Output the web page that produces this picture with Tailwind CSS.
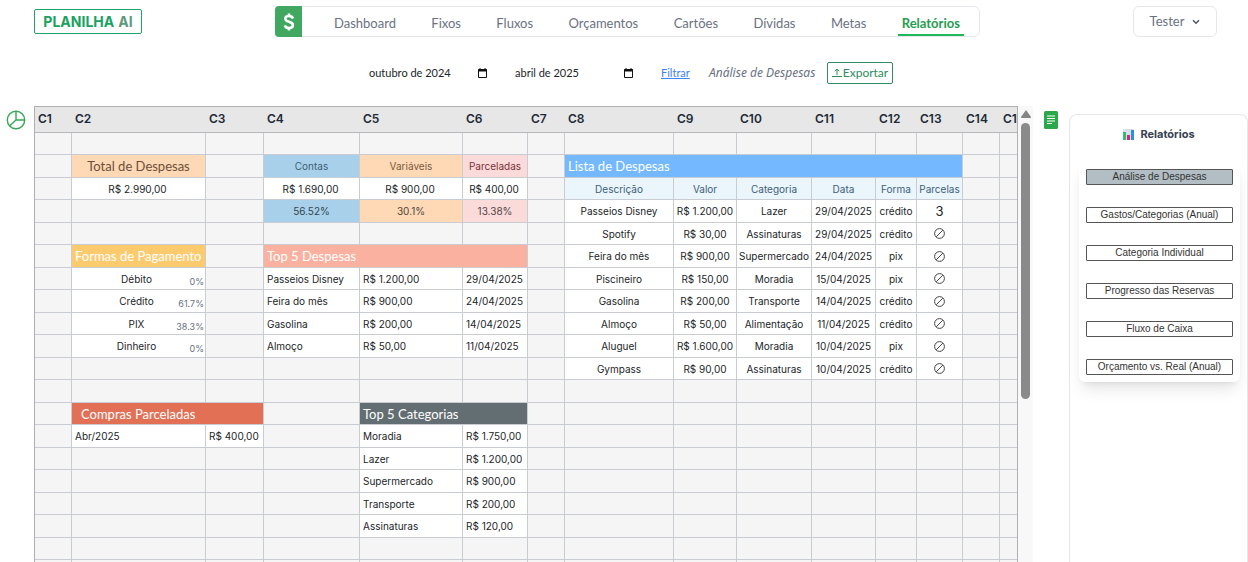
<!DOCTYPE html>
<html lang="pt-BR">
  <head>
    <meta charset="UTF-8" />
    <meta name="viewport" content="width=device-width, initial-scale=1.0" />
    <title>Planilha AI - Relatórios</title>
    <script src="https://cdn.jsdelivr.net/npm/@tailwindcss/browser@4"></script>
  </head>
  <body class="bg-white font-['Lato',sans-serif] text-[#212529]">
    <div class="flex h-screen flex-col overflow-hidden">
      <!-- Top bar -->
      <header class="flex items-start pt-[6px] pr-[31px] pl-[34px]">
        <a
          href="#"
          class="mt-[3px] flex h-[25px] w-[108px] items-center justify-center gap-1 rounded-[2px] border border-[#1fa463] font-['Inter',sans-serif] text-[14px] font-bold text-[#1aa260]"
          >PLANILHA <span class="text-[#5c9a7d]">AI</span></a
        >

        <nav
          class="ml-[133px] flex h-[31px] w-[705px] rounded-[6px] border border-gray-200 text-[13px] text-gray-500"
        >
          <a
            href="#"
            aria-label="Início"
            class="-my-px -ml-px flex w-[27px] items-center justify-center rounded-l-[4px] bg-[#40a860]"
          >
            <svg width="12" height="20" viewBox="0 0 12 20" fill="none" stroke="#fff" stroke-width="2.6">
              <path d="M10 6.500C9.400 4.800 8 4 6 4C3.700 4 2.300 5 2.300 6.700C2.300 10.600 9.900 8.800 9.900 13C9.900 15 8.300 16 6 16C3.800 16 2.300 15.100 1.800 13.300M6 1.500V4M6 16V18.500" />
            </svg>
          </a>
          <div class="flex flex-1 justify-between pr-[15px] pl-[32px]">
            <a href="#" class="flex items-center pt-[4px]">Dashboard</a>
            <a href="#" class="flex items-center pt-[4px]">Fixos</a>
            <a href="#" class="flex items-center pt-[4px]">Fluxos</a>
            <a href="#" class="flex items-center pt-[4px]">Orçamentos</a>
            <a href="#" class="flex items-center pt-[4px]">Cartões</a>
            <a href="#" class="flex items-center pt-[4px]">Dívidas</a>
            <a href="#" class="flex items-center pt-[4px]">Metas</a>
            <a
              href="#"
              class="-ml-1 flex items-center border-b-2 border-[#20b858] px-1 pt-[6px] font-bold text-[#1f9d4f]"
              >Relatórios</a
            >
          </div>
        </nav>

        <button
          class="ml-auto flex h-[31px] w-[84px] items-center justify-center gap-2 rounded-[6px] border border-gray-200 text-[13px] text-gray-500"
        >
          Tester
          <svg width="8" height="6" viewBox="0 0 8 6" fill="none" stroke="#4b5563" stroke-width="1.500">
            <path d="M1 1.200L4 4.200L7 1.200" />
          </svg>
        </button>
      </header>

      <!-- Period filter -->
      <form class="mt-[25px] flex h-[22px] items-center pl-[369px] text-[12px]">
        <input
          type="text"
          aria-label="Mês inicial"
          value="outubro de 2024"
          class="w-[109px] text-[11px] outline-none"
        />
        <button type="button" aria-label="Abrir calendário inicial" class="w-[9px]">
          <svg width="9" height="10" viewBox="0 0 9 10" fill="none" stroke="#111">
            <path d="M.5 1.500H8.500V9.500H.5Z" />
            <path d="M0 2.500H9" stroke-width="2" />
            <path d="M2 0V2M7 0V2" />
          </svg>
        </button>
        <input
          type="text"
          aria-label="Mês final"
          value="abril de 2025"
          class="ml-[28px] w-[109px] text-[11px] outline-none"
        />
        <button type="button" aria-label="Abrir calendário final" class="w-[9px]">
          <svg width="9" height="10" viewBox="0 0 9 10" fill="none" stroke="#111">
            <path d="M.5 1.500H8.500V9.500H.5Z" />
            <path d="M0 2.500H9" stroke-width="2" />
            <path d="M2 0V2M7 0V2" />
          </svg>
        </button>
        <a href="#" class="ml-[28px] w-[48px] text-[11px] text-[#3b82f6] underline">Filtrar</a>
        <span class="w-[118px] font-['Noto_Sans',sans-serif] text-[12px] text-gray-500 italic">Análise de Despesas</span>
        <button
          type="button"
          class="flex h-[22px] w-[66px] items-center justify-center gap-px rounded-[2px] border border-[#2e8b62] text-[12px] text-[#2e8b62]"
        >
          <svg width="10" height="10" viewBox="0 0 10 10" fill="none" stroke="currentColor">
            <path d="M5 7V1M2.800 3.200L5 1L7.200 3.200M0 8.500H10" />
          </svg>
          Exportar
        </button>
      </form>

      <div class="mt-[22px] flex min-h-0 flex-1">
        <!-- Chart shortcut -->
        <div class="w-[34px] shrink-0 pt-[4px] pl-[6px]">
          <button aria-label="Gráficos" class="block">
            <svg width="20" height="20" viewBox="0 0 20 20" fill="none" stroke="#36a853" stroke-width="1.400">
              <circle cx="10" cy="10" r="8.700" />
              <path d="M10 1.300V10H18.700M10 10L3.600 16" />
            </svg>
          </button>
        </div>

        <!-- Sheet -->
        <main class="flex min-w-0 flex-1">
          <div class="min-w-0 flex-1 overflow-hidden border-x border-t border-[#aeb0b3]">
            <table class="w-[1005px] table-fixed border-separate border-spacing-0 font-['Inter',sans-serif] text-[10px]">
              <colgroup>
                <col class="w-[37px]" />
                <col class="w-[134px]" />
                <col class="w-[58px]" />
                <col class="w-[96px]" />
                <col class="w-[103px]" />
                <col class="w-[65px]" />
                <col class="w-[37px]" />
                <col class="w-[109px]" />
                <col class="w-[63px]" />
                <col class="w-[75px]" />
                <col class="w-[64px]" />
                <col class="w-[41px]" />
                <col class="w-[46px]" />
                <col class="w-[37px]" />
                <col class="w-[40px]" />
              </colgroup>
              <thead>
                <tr id="sheet-head" class="h-[26px]"></tr>
              </thead>
              <tbody id="sheet-body"></tbody>
            </table>
          </div>

          <!-- Scrollbar -->
          <div class="flex w-[15px] flex-col items-center bg-[#f8f8f8] pt-[4px]">
            <svg width="10" height="8" viewBox="0 0 10 8" fill="#858585">
              <path d="M5 0L10 7Q10 8 9 8H1Q0 8 0 7Z" />
            </svg>
            <div class="mt-[5px] h-[276px] w-[9px] rounded-full bg-[#8a8a8a]"></div>
          </div>
        </main>

        <!-- Report picker -->
        <div class="w-[36px] shrink-0 pt-[5px] pl-[11px]">
          <button aria-label="Lista de relatórios" class="block">
            <svg width="14" height="18" viewBox="0 0 14 18">
              <rect width="14" height="18" rx="1.500" fill="#2ba84a" />
              <path d="M3 5H11M3 7.500H11M3 10H11M3 12.500H8" stroke="#fff" stroke-width="1.200" />
            </svg>
          </button>
        </div>
        <aside class="mt-[8px] w-[179px] shrink-0 rounded-t-[8px] border border-b-0 border-gray-200 pl-px">
          <h2 class="flex items-center justify-center gap-[6px] pt-[11px] font-['Inter',sans-serif] text-[11px] leading-[16px] font-bold text-gray-700">
            <svg width="11" height="11" viewBox="0 0 11 11">
              <rect width="11" height="11" fill="#dcdfe8" />
              <rect y="3" width="3" height="8" fill="#2fbf71" />
              <rect x="4" y="6" width="3" height="5" fill="#d6247d" />
              <rect x="8" y="1" width="3" height="10" fill="#2b8fe0" />
            </svg>
            Relatórios
          </h2>
          <div class="mt-[20px] mr-[7px] ml-[8px] flex flex-col gap-[22px] rounded-[6px] p-[7px] font-['Liberation_Sans',sans-serif] text-[10px] leading-[14px] text-[#333] shadow-lg">
            <button class="rounded-[1px] border border-[#555] bg-[#b2bec3]">Análise de Despesas</button>
            <button class="rounded-[1px] border border-[#555]">Gastos/Categorias (Anual)</button>
            <button class="rounded-[1px] border border-[#555]">Categoria Individual</button>
            <button class="rounded-[1px] border border-[#555]">Progresso das Reservas</button>
            <button class="rounded-[1px] border border-[#555]">Fluxo de Caixa</button>
            <button class="rounded-[1px] border border-[#555]">Orçamento vs. Real (Anual)</button>
          </div>
        </aside>
      </div>
    </div>

    <script>
      const COLS = 15;
      const ROWS = 20;
      const cells = {};

      // Put a value in a cell (row and column start at 1)
      function put(row, col, text, cls, span = 1) {
        cells[row + "," + col] = { text, cls, span };
      }

      const center = "bg-white pr-[2px] text-center";
      const left = "bg-white pl-[3px]";
      const title = "pl-[3px] font-['Lato',sans-serif] text-[13px] text-white ";

      // Totals
      put(2, 2, "Total de Despesas", "bg-[#ffd9b5] text-center font-['Lato',sans-serif] text-[13px] text-[#6b4f3a]");
      put(3, 2, "R$ 2.990,00", center);
      put(2, 4, "Contas", "bg-[#a8d0ea] text-center text-[#3f5f75]");
      put(2, 5, "Variáveis", "bg-[#ffd9b5] text-center text-[#7a5a40]");
      put(2, 6, "Parceladas", "bg-[#fadbda] text-center text-[#7b3038]");
      put(3, 4, "R$ 1.690,00", center);
      put(3, 5, "R$ 900,00", center);
      put(3, 6, "R$ 400,00", center);
      put(4, 4, "56.52%", "bg-[#a8d0ea] text-center text-[#33454f]");
      put(4, 5, "30.1%", "bg-[#ffd9b5] text-center text-[#4f463d]");
      put(4, 6, "13.38%", "bg-[#fadbda] text-center text-[#4f4344]");

      // Payment methods
      put(6, 2, "Formas de Pagamento", title + "bg-[#fdcb6e]");
      [
        ["Débito", "0%"],
        ["Crédito", "61.7%"],
        ["PIX", "38.3%"],
        ["Dinheiro", "0%"],
      ].forEach(([name, pct], i) => {
        put(
          7 + i,
          2,
          `<div class="grid grid-cols-3 items-center"><span></span><span class="pr-[4px] text-center">${name}</span><span class="pt-[6px] pr-px text-right text-[9px] leading-[12px] text-gray-500">${pct}</span></div>`,
          "bg-white"
        );
      });

      // Top 5 expenses
      put(6, 4, "Top 5 Despesas", title + "bg-[#fab1a0]", 3);
      [
        ["Passeios Disney", "R$ 1.200,00", "29/04/2025"],
        ["Feira do mês", "R$ 900,00", "24/04/2025"],
        ["Gasolina", "R$ 200,00", "14/04/2025"],
        ["Almoço", "R$ 50,00", "11/04/2025"],
      ].forEach((item, i) => item.forEach((text, j) => put(7 + i, 4 + j, text, left)));

      // Installments
      put(13, 2, "Compras Parceladas", "bg-[#e17055] pl-[9px] font-['Lato',sans-serif] text-[13px] text-white", 2);
      put(14, 2, "Abr/2025", left);
      put(14, 3, "R$ 400,00", left);

      // Top 5 categories
      put(13, 5, "Top 5 Categorias", title + "bg-[#636e72]", 2);
      [
        ["Moradia", "R$ 1.750,00"],
        ["Lazer", "R$ 1.200,00"],
        ["Supermercado", "R$ 900,00"],
        ["Transporte", "R$ 200,00"],
        ["Assinaturas", "R$ 120,00"],
      ].forEach((item, i) => item.forEach((text, j) => put(14 + i, 5 + j, text, left)));

      // Expense list
      const none =
        '<svg class="mx-auto" width="11" height="11" viewBox="0 0 11 11" fill="none" stroke="#444"><circle cx="5.500" cy="5.500" r="4.900"/><path d="M2.200 8.800L8.800 2.200"/></svg>';
      put(2, 8, "Lista de Despesas", title + "bg-[#74b9ff]", 6);
      ["Descrição", "Valor", "Categoria", "Data", "Forma", "Parcelas"].forEach((text, j) =>
        put(3, 8 + j, text, "bg-[#eaf5fc] text-center text-[#3d6178]")
      );
      [
        ["Passeios Disney", "R$ 1.200,00", "Lazer", "29/04/2025", "crédito", '<span class="text-[13px]">3</span>'],
        ["Spotify", "R$ 30,00", "Assinaturas", "29/04/2025", "crédito", none],
        ["Feira do mês", "R$ 900,00", "Supermercado", "24/04/2025", "pix", none],
        ["Piscineiro", "R$ 150,00", "Moradia", "15/04/2025", "pix", none],
        ["Gasolina", "R$ 200,00", "Transporte", "14/04/2025", "crédito", none],
        ["Almoço", "R$ 50,00", "Alimentação", "11/04/2025", "crédito", none],
        ["Aluguel", "R$ 1.600,00", "Moradia", "10/04/2025", "pix", none],
        ["Gympass", "R$ 90,00", "Assinaturas", "10/04/2025", "crédito", none],
      ].forEach((item, i) => item.forEach((text, j) => put(4 + i, 8 + j, text, "bg-white text-center")));

      // Render
      let head = "";
      for (let c = 1; c <= COLS; c++) {
        head += `<th class="border-b border-[#b5b7ba] bg-[#e7e7e7] pb-[2px] pl-[3px] text-left text-[12px] font-semibold leading-[18px] text-[#212936]">C${c}</th>`;
      }
      document.getElementById("sheet-head").innerHTML = head;

      let body = "";
      for (let r = 1; r <= ROWS; r++) {
        body += '<tr class="odd:h-[22px] even:h-[23px]">';
        for (let c = 1; c <= COLS; c++) {
          const cell = cells[r + "," + c] || { text: "", cls: "bg-[#f5f5f5]", span: 1 };
          body += `<td colspan="${cell.span}" class="border-r border-b border-[#c9ccd2] leading-[18px] whitespace-nowrap ${cell.cls}">${cell.text}</td>`;
          c += cell.span - 1;
        }
        body += "</tr>";
      }
      document.getElementById("sheet-body").innerHTML = body;
    </script>
  </body>
</html>
